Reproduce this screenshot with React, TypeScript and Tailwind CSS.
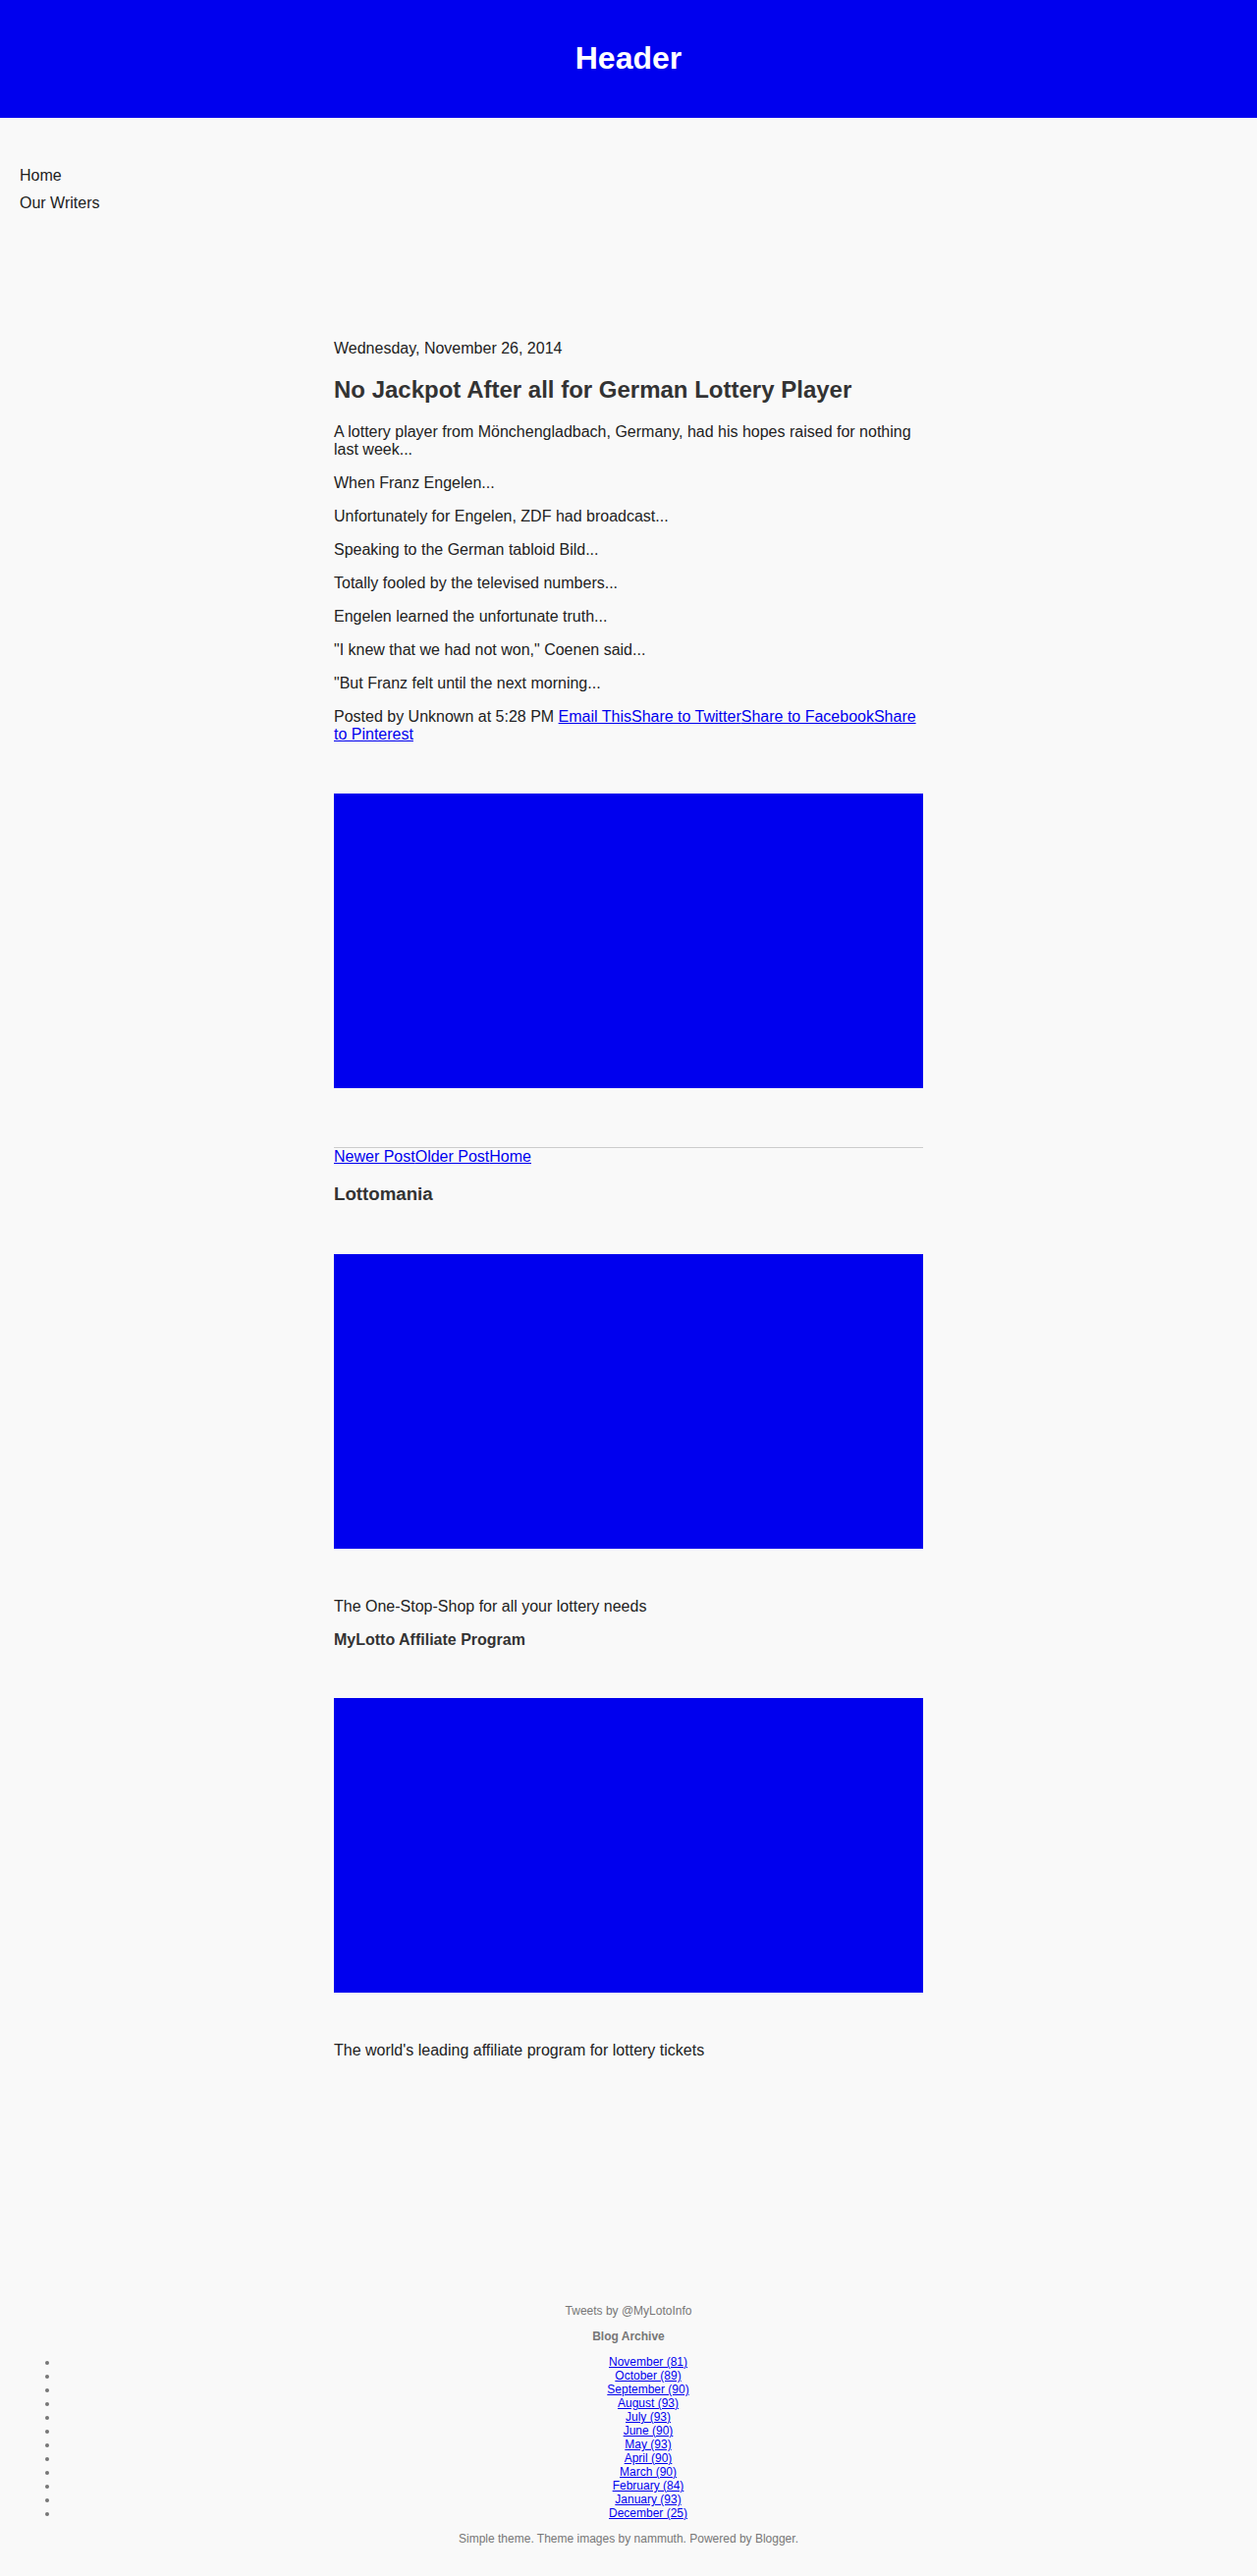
const paragraphs = [
  'When Franz Engelen...',
  'Unfortunately for Engelen, ZDF had broadcast...',
  'Speaking to the German tabloid Bild...',
  'Totally fooled by the televised numbers...',
  'Engelen learned the unfortunate truth...',
  '"I knew that we had not won," Coenen said...',
  '"But Franz felt until the next morning...',
]

const archive = [
  'November (81)',
  'October (89)',
  'September (90)',
  'August (93)',
  'July (93)',
  'June (90)',
  'May (93)',
  'April (90)',
  'March (90)',
  'February (84)',
  'January (93)',
  'December (25)',
]

const link = 'text-[#0000ee] underline'

const App = () => {
  return (
    <div className="min-h-[2623px] bg-[#f9f9f9] text-[#222] text-[16px] leading-[18px] font-['Liberation_Sans',Arial,sans-serif]">
      {/* Header */}
      <header className="h-[120px] bg-[#0000ee] flex items-center justify-center pb-[2px]">
        <h1 className="text-[32px] leading-[34px] font-bold text-white">Header</h1>
      </header>

      {/* Page nav */}
      <ul className="mt-[45px] pl-5 text-[#222]">
        <li className="leading-[28px]">Home</li>
        <li className="leading-[28px]">Our Writers</li>
      </ul>

      {/* Main column */}
      <main className="mx-auto w-[600px] mt-[125px]">
        <div>Wednesday, November 26, 2014</div>
        <h2 className="mt-[19px] text-[24px] leading-[28px] font-bold text-[#333]">
          No Jackpot After all for German Lottery Player
        </h2>
        <p className="mt-[20px]">
          A lottery player from Mönchengladbach, Germany, had his hopes raised for nothing last week...
        </p>
        {paragraphs.map((text) => (
          <p key={text} className="mt-4">{text}</p>
        ))}
        <div className="mt-4">
          Posted by Unknown at 5:28 PM{' '}
          <a className={link} href="#">Email This</a>
          <a className={link} href="#">Share to Twitter</a>
          <a className={link} href="#">Share to Facebook</a>
          <a className={link} href="#">Share to Pinterest</a>
        </div>

        <div className="mt-[51px] h-[300px] bg-[#0000ee]" />

        <div className="mt-[60px] border-t border-[#cccccc]">
          <a className={link} href="#">Newer Post</a>
          <a className={link} href="#">Older Post</a>
          <a className={link} href="#">Home</a>
        </div>

        {/* Sidebar widgets */}
        <h3 className="mt-[18px] text-[18.7px] leading-[22px] font-bold text-[#333]">Lottomania</h3>
        <div className="mt-[50px] h-[300px] bg-[#0000ee]" />
        <p className="mt-[50px]">The One-Stop-Shop for all your lottery needs</p>
        <h3 className="mt-4 font-bold text-[#333]">MyLotto Affiliate Program</h3>
        <div className="mt-[50px] h-[300px] bg-[#0000ee]" />
        <p className="mt-[50px]">The world's leading affiliate program for lottery tickets</p>
      </main>

      {/* Footer */}
      <footer className="mt-[249px] pl-[17px] pr-5 pb-[30px] text-center text-[12px] leading-[14px] text-[#777]">
        <div className="ml-[3px]">Tweets by @MyLotoInfo</div>
        <h2 className="mt-3 ml-[3px] font-bold">Blog Archive</h2>
        <ul className="mt-3 pl-[43px] list-disc">
          {archive.map((month) => (
            <li key={month}>
              <a className={link} href="#">{month}</a>
            </li>
          ))}
        </ul>
        <div className="mt-3 ml-[3px]">Simple theme. Theme images by nammuth. Powered by Blogger.</div>
      </footer>
    </div>
  )
}

export default App
